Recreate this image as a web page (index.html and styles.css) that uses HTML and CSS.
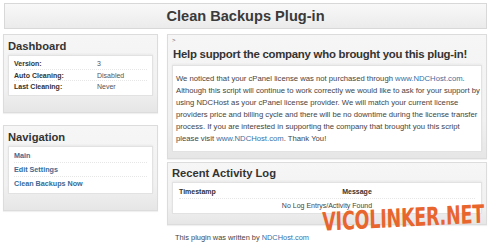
FILE: index.html
```html
<!DOCTYPE html>
<html>
<head>
<meta charset="utf-8">
<link rel="stylesheet" href="styles.css">
</head>
<body>
<div class="page">
  <div class="header">Clean Backups Plug-in</div>
  <div class="cols">
    <div class="left">
      <div class="box dash">
        <h2 class="box-title">Dashboard</h2>
        <div class="inner">
          <div class="row"><span class="lbl">Version:</span><span class="val">3</span></div>
          <div class="row"><span class="lbl">Auto Cleaning:</span><span class="val">Disabled</span></div>
          <div class="row last"><span class="lbl">Last Cleaning:</span><span class="val">Never</span></div>
        </div>
      </div>
      <div class="box nav-box">
        <h2 class="box-title">Navigation</h2>
        <div class="inner">
          <a class="nav-link">Main</a>
          <a class="nav-link">Edit Settings</a>
          <a class="nav-link last">Clean Backups Now</a>
        </div>
      </div>
    </div>
    <div class="right">
      <div class="box support">
        <div class="gt">&gt;</div>
        <h2 class="box-title big">Help support the company who brought you this plug-in!</h2>
        <div class="inner text">
          We noticed that your cPanel license was not purchased through <a class="link">www.NDCHost.com</a>.<br>
          Although this script will continue to work correctly we would like to ask for your support by<br>
          using NDCHost as your cPanel license provider. We will match your current license<br>
          providers price and billing cycle and there will be no downtime during the license transfer<br>
          process. If you are interested in supporting the company that brought you this script<br>
          please visit <a class="link">www.NDCHost.com</a>. Thank You!
        </div>
      </div>
      <div class="box log">
        <h2 class="box-title">Recent Activity Log</h2>
        <div class="inner logi">
          <div class="log-head"><span class="ts">Timestamp</span><span class="msg">Message</span></div>
          <div class="log-row">No Log Entrys/Activity Found</div>
        </div>
      </div>
      <div class="footer">This plugin was written by <a class="link">NDCHost.com</a></div>
    </div>
  </div>
  <div class="watermark">VicoLinker.net</div>
</div>
</body>
</html>
```

FILE: styles.css
```css
html, body {
  margin: 0;
  padding: 0;
  background: #fff;
}
body {
  font-family: "Liberation Sans", Arial, sans-serif;
  color: #333;
  width: 491px;
  height: 244px;
  overflow: hidden;
}
.page {
  position: relative;
  padding: 3px 4px 0 3px;
}
.header {
  margin-left: 1px;
  height: 24px;
  line-height: 24px;
  text-align: center;
  font-weight: bold;
  font-size: 14.6px;
  color: #3a3a3a;
  border: 1px solid #d8d8d8;
  background: linear-gradient(#f8f8f8, #ebebeb);
}
.cols {
  display: flex;
  gap: 9px;
  margin-top: 5px;
}
.left {
  width: 155px;
  flex: none;
  display: flex;
  flex-direction: column;
  gap: 12px;
}
.right {
  flex: 1;
  min-width: 0;
  display: flex;
  flex-direction: column;
}
.box {
  border: 1px solid #dcdcdc;
  background: linear-gradient(#f6f6f6, #f1f1f1 70%, #e6e6e6);
  padding: 0 4px 16px 4px;
  box-shadow: 0 1px 1px rgba(0,0,0,0.06);
}
.box-title {
  margin: 0;
  font-size: 11.2px;
  font-weight: bold;
  color: #333;
  padding: 5px 0 2px 0;
  line-height: 13px;
}
.inner {
  background: #fff;
  border: 1px solid #e2e2e2;
  box-shadow: 0 -1px 2px rgba(0,0,0,0.05);
  padding: 2px 5px 2px 5px;
  font-size: 7px;
}
.row {
  display: flex;
  height: 11.5px;
  line-height: 11px;
  border-bottom: 1px dotted #e6e6e6;
  box-sizing: border-box;
}
.row.last { border-bottom: none; }
.lbl {
  width: 83px;
  font-weight: bold;
  color: #333;
}
.val {
  color: #555;
}
.nav-link {
  display: block;
  font-weight: bold;
  font-size: 7.2px;
  color: #3c6a94;
  height: 14px;
  line-height: 13px;
  border-bottom: 1px dotted #e6e6e6;
  box-sizing: border-box;
}
.nav-link.last { border-bottom: none; }
.support {
  padding-bottom: 6px;
}
.gt {
  font-size: 6px;
  line-height: 7px;
  padding-top: 2px;
  color: #666;
}
.box-title.big {
  font-size: 11.4px;
  letter-spacing: -0.25px;
  padding: 4px 0 4px 1px;
  white-space: nowrap;
}
.text {
  font-size: 7.7px;
  line-height: 12px;
  color: #444;
  padding: 7px 4px 6px 3px;
  white-space: nowrap;
}
.link {
  color: #3a6f9f;
}
.log {
  margin-top: 3px;
  padding-bottom: 10px;
}
.log .box-title {
  padding: 4px 0 2px 0;
}
.logi {
  padding: 2px 6px 1px 6px;
}
.log-head {
  display: flex;
  font-weight: bold;
  height: 14px;
  line-height: 13px;
  border-bottom: 1px dotted #e6e6e6;
  box-sizing: border-box;
}
.ts { width: 60px; }
.msg { flex: 1; text-align: center; }
.log-row {
  text-align: center;
  height: 13px;
  line-height: 13px;
  color: #444;
}
.footer {
  font-size: 7.4px;
  line-height: 10px;
  color: #444;
  padding-left: 8px;
  margin-top: 8px;
}
.watermark {
  position: absolute;
  left: 322px;
  top: 209px;
  font-family: "DejaVu Sans", sans-serif;
  font-weight: bold;
  font-size: 17.5px;
  line-height: 18px;
  color: #e8652e;
  letter-spacing: -0.2px;
  text-transform: uppercase;
  transform: scale(1, 1.45) rotate(-2deg);
  transform-origin: left top;
}
```
